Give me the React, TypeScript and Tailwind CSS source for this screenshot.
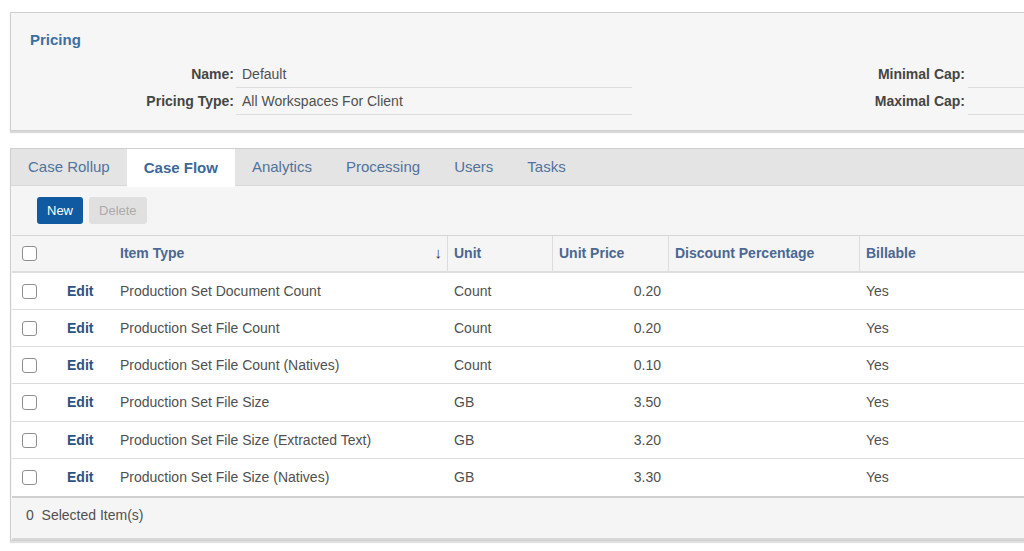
import React from "react";

const rows = [
  { type: "Production Set Document Count", unit: "Count", price: "0.20" },
  { type: "Production Set File Count", unit: "Count", price: "0.20" },
  { type: "Production Set File Count (Natives)", unit: "Count", price: "0.10" },
  { type: "Production Set File Size", unit: "GB", price: "3.50" },
  { type: "Production Set File Size (Extracted Text)", unit: "GB", price: "3.20" },
  { type: "Production Set File Size (Natives)", unit: "GB", price: "3.30" },
];

const tabs = ["Case Rollup", "Case Flow", "Analytics", "Processing", "Users", "Tasks"];

function Box() {
  return <span className="block w-[15px] h-[15px] rounded-[3px] border border-[#8f8f8f] bg-white" />;
}

export default function App() {
  return (
    <div
      className="w-[1024px] h-[551px] overflow-hidden bg-white text-[#505050]"
      style={{ fontFamily: '"Liberation Sans", Arial, sans-serif' }}
    >
      <div className="pt-[12px] pl-[10px]">
        {/* Pricing card */}
        <div className="w-[1040px] bg-[#f6f6f6] border border-[#cfcfcf] shadow-[0_2px_1px_rgba(0,0,0,0.15)] pt-[17px] pb-[15px] pl-[19px]">
          <div className="text-[15px] font-bold text-[#3f6ea3] leading-[20px]">Pricing</div>
          <div className="mt-[11px] flex">
            <div className="flex flex-col">
              {[
                ["Name:", "Default"],
                ["Pricing Type:", "All Workspaces For Client"],
              ].map(([l, v]) => (
                <div key={l} className="flex h-[27px] items-center">
                  <div className="w-[204px] text-right text-[14px] font-bold text-[#454545]">{l}</div>
                  <div className="ml-[2px] w-[396px] h-[27px] pl-[6px] flex items-center text-[14px] text-[#505050] border-b border-[#dcdcdc]">
                    {v}
                  </div>
                </div>
              ))}
            </div>
            <div className="ml-[100px] flex flex-col">
              {["Minimal Cap:", "Maximal Cap:"].map((l) => (
                <div key={l} className="flex h-[27px] items-center">
                  <div className="w-[233px] text-right text-[14px] font-bold text-[#454545]">{l}</div>
                  <div className="ml-[3px] w-[200px] h-[27px] border-b border-[#dcdcdc]" />
                </div>
              ))}
            </div>
          </div>
        </div>

        {/* Tabs card */}
        <div className="mt-[17px] w-[1040px] bg-[#f5f5f5] border border-[#cfcfcf] shadow-[0_2px_1px_rgba(0,0,0,0.12)]">
          <div className="flex h-[37px] bg-[#e4e4e4] border-b border-[#d8d8d8]">
            {tabs.map((t) => (
              <div
                key={t}
                className={
                  "px-[17px] flex items-center text-[15px] " +
                  (t === "Case Flow"
                    ? "bg-white font-bold text-[#3d6898] h-[38px]"
                    : "text-[#52739b]")
                }
              >
                {t}
              </div>
            ))}
          </div>
          <div className="h-[49px] flex items-center gap-[6px] pl-[26px]">
            <div className="h-[27px] px-[10px] flex items-center rounded-[3px] bg-[#0f5aa0] text-white text-[13px]">
              New
            </div>
            <div className="h-[27px] px-[10px] flex items-center rounded-[3px] bg-[#e0e0e0] text-[#ababab] text-[13px]">
              Delete
            </div>
          </div>
          <div className="border-t border-[#d6d6d6] ml-[1px]">
            <div className="flex h-[37px] items-center border-b-2 border-[#dedede] text-[14px] font-bold text-[#4a6891]">
              <div className="w-[49px] pl-[10px] flex items-center"><Box /></div>
              <div className="w-[386px] h-full flex items-center pl-[59px] relative">
                Item Type
                <span className="absolute right-[5px] top-[6px] text-[15px] text-[#333] font-normal">↓</span>
              </div>
              <div className="w-[105px] h-full flex items-center pl-[6px] border-l border-[#dcdcdc]">Unit</div>
              <div className="w-[116px] h-full flex items-center pl-[6px] border-l border-[#dcdcdc]">Unit Price</div>
              <div className="w-[191px] h-full flex items-center pl-[6px] border-l border-[#dcdcdc]">Discount Percentage</div>
              <div className="flex-1 h-full flex items-center pl-[6px] border-l border-[#dcdcdc]">Billable</div>
            </div>
            {rows.map((r, i) => (
              <div
                key={r.type}
                className={
                  "flex items-center bg-white text-[14px] text-[#505050] " +
                  (i === 3 ? "h-[38px] " : "h-[37px] ") +
                  (i < rows.length - 1 ? "border-b border-[#dcdcdc]" : "h-[39px] border-b-2 border-[#cfcfcf]")
                }
              >
                <div className="w-[49px] pl-[10px] flex items-center"><Box /></div>
                <div className="w-[59px] pl-[6px] font-bold text-[#2b5283]">Edit</div>
                <div className="w-[327px]">{r.type}</div>
                <div className="w-[105px] pl-[7px]">{r.unit}</div>
                <div className="w-[116px] pr-[7px] text-right">{r.price}</div>
                <div className="w-[191px]" />
                <div className="flex-1 pl-[7px]">Yes</div>
              </div>
            ))}
            <div className="h-[42px] pt-[7px] pl-[14px] text-[14px] text-[#505050] border-b-2 border-[#d8d8d8]">
              0&nbsp;&nbsp;Selected Item(s)
            </div>
          </div>
        </div>
      </div>
    </div>
  );
}
